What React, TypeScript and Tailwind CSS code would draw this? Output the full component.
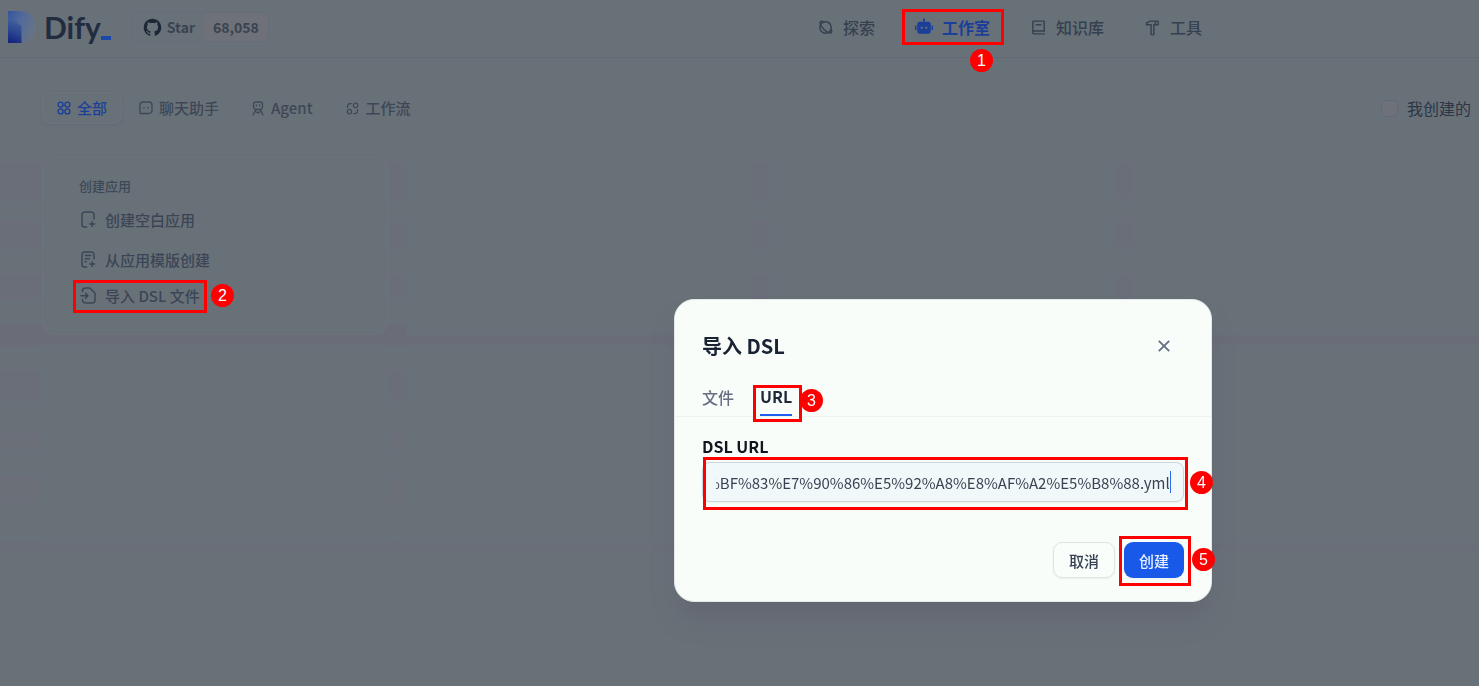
import { useEffect, useRef, type ReactNode } from 'react';
import {
  RiPlanetLine,
  RiRobot2Fill,
  RiBook2Line,
  RiHammerLine,
  RiExchange2Line,
  RiGithubFill,
  RiCloseLine,
} from 'react-icons/ri';

function Callout({ n, box, dot }: { n: number; box: string; dot: string }) {
  return (
    <>
      <span className={`pointer-events-none absolute border-3 border-[#ff0000] ${box}`} />
      <span
        className={`absolute flex size-[23px] items-center justify-center rounded-full bg-[#ff0000] font-['Liberation_Sans',sans-serif] text-base leading-none font-normal text-white ${dot}`}
      >
        {n}
      </span>
    </>
  );
}

function LogoMark() {
  return (
    <svg width="28" height="32" viewBox="0 0 28 32" aria-hidden="true">
      <defs>
        <linearGradient id="stem" x1="0.2" y1="0" x2="0" y2="1">
          <stop offset="0" stopColor="#47629f" />
          <stop offset="0.5" stopColor="#2b4691" />
          <stop offset="1" stopColor="#12207a" />
        </linearGradient>
        <linearGradient id="bowl" x1="0" y1="0" x2="1" y2="0.5">
          <stop offset="0" stopColor="#37549c" />
          <stop offset="0.45" stopColor="#51699c" />
          <stop offset="1" stopColor="#677385" />
        </linearGradient>
      </defs>
      <path d="M0 0h12c9 0 16 6 16 15.500S21 32 13.500 32V15L0 8z" fill="url(#bowl)" />
      <path d="M0 6l13.500 9v17H0z" fill="url(#stem)" />
    </svg>
  );
}

function AllIcon() {
  return (
    <svg width="14" height="14" viewBox="0 0 14 14" fill="none" stroke="currentColor" strokeWidth="1.4" aria-hidden="true">
      <circle cx="3.600" cy="3.600" r="2.500" />
      <circle cx="10.400" cy="3.600" r="2.500" />
      <circle cx="3.600" cy="10.400" r="2.500" />
      <circle cx="10.400" cy="10.400" r="2.500" />
    </svg>
  );
}

function ChatIcon() {
  return (
    <svg width="14" height="14" viewBox="0 0 14 14" fill="none" stroke="currentColor" strokeWidth="1.3" aria-hidden="true">
      <path d="M4 1h6a3 3 0 0 1 3 3v5.500a3 3 0 0 1-3 3H2a1 1 0 0 1-1-1V4a3 3 0 0 1 3-3z" />
      <path d="M5 6v1.600M9 6v1.600" />
    </svg>
  );
}

function AgentIcon() {
  return (
    <svg width="14" height="15" viewBox="0 0 14 15" fill="none" stroke="currentColor" strokeWidth="1.3" strokeLinecap="round" aria-hidden="true">
      <path d="M4.500 1h5a2 2 0 0 1 2 2v2.500a3 3 0 0 1-3 3h-3a3 3 0 0 1-3-3V3a2 2 0 0 1 2-2z" />
      <path d="M5.300 4v.8M8.700 4v.8M4.800 8.500 2 14M9.200 8.500 12 14M4 10.500l3 1.200 3-1.200" />
    </svg>
  );
}

function BlankFileIcon() {
  return (
    <svg width="18" height="18" viewBox="0 0 18 18" fill="none" stroke="currentColor" strokeWidth="1.500" strokeLinecap="round" aria-hidden="true">
      <path d="M15 8V3.500A2.500 2.500 0 0 0 12.500 1h-7A2.500 2.500 0 0 0 3 3.500v10A2.500 2.500 0 0 0 5.500 16h2" />
      <path d="M13.200 10.700v4.800M10.800 13.100h4.800" />
    </svg>
  );
}

function TemplateFileIcon() {
  return (
    <svg width="18" height="18" viewBox="0 0 18 18" fill="none" stroke="currentColor" strokeWidth="1.500" strokeLinecap="round" aria-hidden="true">
      <path d="M15 8V3.500A2.500 2.500 0 0 0 12.500 1h-7A2.500 2.500 0 0 0 3 3.500v10A2.500 2.500 0 0 0 5.500 16h2" />
      <path d="M13.200 10.700v4.800M10.800 13.100h4.800M6.300 4.600h5.600M6.300 7.700h4.200M6.300 10.800h1" />
    </svg>
  );
}

function ImportFileIcon() {
  return (
    <svg width="18" height="18" viewBox="0 0 18 18" fill="none" stroke="currentColor" strokeWidth="1.500" strokeLinecap="round" strokeLinejoin="round" aria-hidden="true">
      <path d="M3.500 4.500V4a3 3 0 0 1 3-3h4.200L16 6v7a3 3 0 0 1-3 3H6.500a3 3 0 0 1-3-3v-.5" />
      <path d="M2 8.700h6.700M6.500 6.300l2.400 2.400-2.400 2.400" />
    </svg>
  );
}

function NavItem({ icon, label, active, children }: { icon: ReactNode; label: string; active?: boolean; children?: ReactNode }) {
  return (
    <a
      href="#"
      className={`relative flex h-9 items-center gap-[9px] text-base ${active ? 'font-bold text-[#1b3f99]' : 'font-medium text-[#354050]'}`}
    >
      {icon}
      {label}
      {children}
    </a>
  );
}

function FilterTab({ icon, label, active }: { icon: ReactNode; label: string; active?: boolean }) {
  return (
    <button
      type="button"
      className={`flex h-8 items-center gap-[6px] rounded-lg border px-[14px] text-[15px] font-medium ${
        active ? 'border-[#70737b] text-[#1b3f99] shadow-sm shadow-[#62667480]' : 'border-transparent text-[#3d4757]'
      }`}
    >
      {icon}
      {label}
    </button>
  );
}

function Card() {
  return <div className="bg-[#697178]" />;
}

const stripes =
  'bg-[linear-gradient(#697178_0_6px,#6a6e78_10px_42px,#697178_50px_62px,#6a6e78_70px_92px,#697178_98px_118px,#6a6e78_124px_142px,#697178_150px_168px,#6a6d78_172px_190px,#697178_196px_214px,#6a6e78_220px_242px,#697178_250px_276px,#6a6f78_280px_294px,#697178_300px_320px,#6a6f78_324px_346px,#697178_352px_386px,#696e78_388px_394px,#697178_400px)]';

const createRow = 'relative flex items-center gap-2 text-[15px] font-medium text-[#3b4555]';

function ImportDialog() {
  const input = useRef<HTMLInputElement>(null);
  useEffect(() => {
    if (input.current) input.current.scrollLeft = input.current.scrollWidth;
  }, []);

  return (
    <div className="fixed inset-0 flex items-start pt-[299px] pl-[674px]">
      <section
        role="dialog"
        aria-labelledby="dialog-title"
        className="w-[538px] rounded-[20px] border border-[#e3e8e8] bg-[#f8fdf9] pb-[23px] shadow-[0_20px_24px_-4px_rgba(90,88,105,0.4)]"
      >
        <header className="flex items-center justify-between pt-7 pr-9 pl-[27px]">
          <h2 id="dialog-title" className="text-xl leading-9 font-bold text-[#1a2333]">
            导入 DSL
          </h2>
          <button type="button" aria-label="关闭" className="text-[#667085]">
            <RiCloseLine size={22} />
          </button>
        </header>

        <div role="tablist" className="flex h-[53px] items-end gap-[26px] border-b border-[#eff4f1] px-[27px] text-base">
          <button type="button" role="tab" aria-selected="false" className="h-9 pb-[3px] font-medium text-[#676f83]">
            文件
          </button>
          <button
            type="button"
            role="tab"
            aria-selected="true"
            className="relative h-9 border-b-2 border-[#1f5df0] pb-[2px] font-bold text-[#1f2838]"
          >
            URL
            <Callout n={3} box="top-[5px] -left-[7px] h-[37px] w-[49px]" dot="top-[9px] left-10" />
          </button>
        </div>

        <div className="px-[27px] pt-[15px]">
          <label htmlFor="dsl-url" className="block pb-[2px] text-base leading-7 font-bold text-[#10151f]">
            DSL URL
          </label>
          <div className="relative">
            <input
              id="dsl-url"
              ref={input}
              type="text"
              defaultValue="%E5%BF%83%E7%90%86%E5%92%A8%E8%AF%A2%E5%B8%88.yml"
              className="block h-10 w-full rounded-lg border border-[#cbd6dc] bg-[#f1f8f9] px-[13px] text-[15px] text-[#3a4354] shadow-xs outline-none"
            />
            <span className="absolute top-[9px] right-[13px] h-[22px] w-px bg-[#2f6bf2]" />
            <Callout n={4} box="-top-[5px] left-px -right-1 h-[53px]" dot="top-[9px] -right-[29px]" />
          </div>
        </div>

        <footer className="flex justify-end gap-[9px] px-[27px] pt-10">
          <button
            type="button"
            className="h-9 rounded-[9px] border border-[#dfe4e2] bg-[#fafefb] px-[15px] pt-[2px] text-[15px] font-medium text-[#354052] shadow-xs"
          >
            取消
          </button>
          <button
            type="button"
            className="relative h-9 rounded-[9px] bg-[#1959ea] px-[15px] pt-[2px] text-[15px] font-medium text-[#e6f0ff] shadow-xs"
          >
            创建
            <Callout n={5} box="-top-[6px] -left-[5px] h-[50px] w-[72px]" dot="top-[6px] left-[68px]" />
          </button>
        </footer>
      </section>
    </div>
  );
}

export default function App() {
  return (
    <div className="flex min-h-screen flex-col overflow-hidden bg-[#697178] font-['Noto_Sans_CJK_SC',sans-serif]">
      <header className="flex h-[58px] items-center justify-between border-b border-[#626a73] pr-[277px] pb-[3px] pl-2">
        <div className="flex items-center">
          <a href="#" className="flex items-center gap-2" aria-label="Dify_">
            <LogoMark />
            <span className="flex items-end font-['Lato',sans-serif] text-[30px] leading-9 font-bold text-[#222c40]">
              Dify
              <span className="mb-[5px] h-1 w-[10px] bg-[#1c48a8]" />
            </span>
          </a>
          <a
            href="#"
            className="ml-[21px] flex h-[30px] items-stretch overflow-hidden rounded-md border border-[#666c78] text-sm font-bold text-[#3a4352]"
          >
            <span className="flex items-center gap-1 px-[9px]">
              <RiGithubFill size={21} className="text-[#1e2737]" />
              Star
            </span>
            <span className="flex items-center bg-[#6e7177] px-[9px]">68,058</span>
          </a>
        </div>
        <nav className="flex items-center gap-10">
          <NavItem icon={<RiPlanetLine size={17} />} label="探索" />
          <NavItem active icon={<RiRobot2Fill size={18} />} label="工作室">
            <Callout n={1} box="top-0 -left-[13px] -right-[14px] h-9" dot="top-10 left-[55px]" />
          </NavItem>
          <NavItem icon={<RiBook2Line size={17} />} label="知识库" />
          <NavItem icon={<RiHammerLine size={17} />} label="工具" />
        </nav>
      </header>

      <div className="flex items-center justify-between pt-[34px] pr-2 pb-[30px] pl-[42px]">
        <div className="flex items-center gap-[2px]">
          <FilterTab active icon={<AllIcon />} label="全部" />
          <FilterTab icon={<ChatIcon />} label="聊天助手" />
          <FilterTab icon={<AgentIcon />} label="Agent" />
          <FilterTab icon={<RiExchange2Line size={15} />} label="工作流" />
        </div>
        <label className="flex items-center gap-[9px] text-base text-[#2c3647]">
          <input type="checkbox" className="size-[17px] appearance-none rounded-[4px] border border-[#61687a] bg-[#6e7177]" />
          我创建的
        </label>
      </div>

      <main
        className={`grid flex-1 grid-cols-4 grid-rows-[178px_198px_1fr] gap-x-[18px] gap-y-[10px] pt-[3px] pl-[42px] ${stripes}`}
      >
        <section className="rounded-xl border border-[#6e7379] bg-[#697178] pt-[14px] pl-9">
          <h3 className="pb-px text-[13px] leading-[27px] font-medium text-[#3d4757]">创建应用</h3>
          <button type="button" className={`${createRow} h-10`}>
            <BlankFileIcon />
            创建空白应用
          </button>
          <button type="button" className={`${createRow} h-10`}>
            <TemplateFileIcon />
            从应用模版创建
          </button>
          <button type="button" className={`${createRow} h-8`}>
            <ImportFileIcon />
            导入 DSL 文件
            <Callout n={2} box="top-0 -left-[6px] h-[33px] w-[134px]" dot="top-1 left-[132px]" />
          </button>
        </section>
        {Array.from({ length: 11 }, (_, i) => (
          <Card key={i} />
        ))}
      </main>

      <ImportDialog />
    </div>
  );
}
